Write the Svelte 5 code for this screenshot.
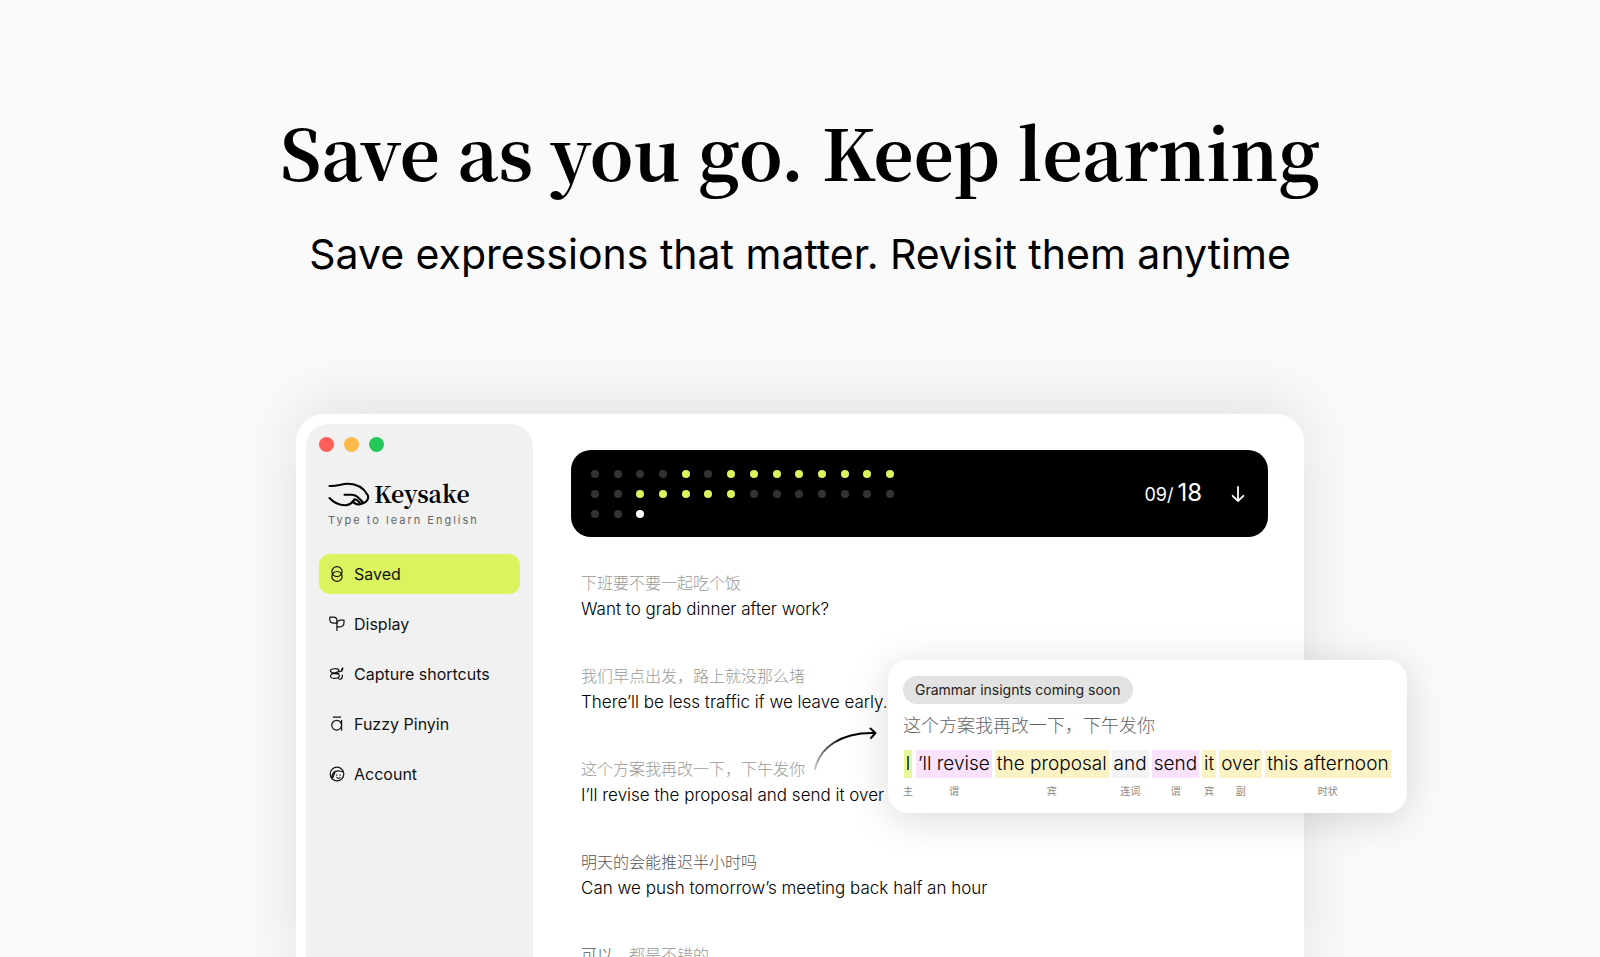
<script>
  const nav = [
    { id: 'saved', label: 'Saved', active: true },
    { id: 'display', label: 'Display' },
    { id: 'capture', label: 'Capture shortcuts' },
    { id: 'pinyin', label: 'Fuzzy Pinyin' },
    { id: 'account', label: 'Account' }
  ];

  // One character per day: o = idle, x = practised, w = today
  const days = 'ooooxoxxxxxxxx' + 'ooxxxxxooooooo' + 'oow';

  const phrases = [
    { zh: '下班要不要一起吃个饭', en: 'Want to grab dinner after work?' },
    { zh: '我们早点出发，路上就没那么堵', en: 'There’ll be less traffic if we leave early.' },
    { zh: '这个方案我再改一下，下午发你', en: 'I’ll revise the proposal and send it over this afternoon' },
    { zhStrong: '明天的会能推迟半小时吗', zh: '', en: 'Can we push tomorrow’s meeting back half an hour' },
    { zhStrong: '可以，', zh: '都是不错的' }
  ];

  const tokens = [
    { text: 'I', role: '主', tone: 'lime' },
    { text: '’ll revise', role: '谓', tone: 'pink' },
    { text: 'the proposal', role: '宾', tone: 'yellow' },
    { text: 'and', role: '连词', tone: 'grey' },
    { text: 'send', role: '谓', tone: 'pink' },
    { text: 'it', role: '宾', tone: 'yellow' },
    { text: 'over', role: '副', tone: 'yellow' },
    { text: 'this afternoon', role: '时状', tone: 'yellow' }
  ];
</script>

<main class="page">
  <header class="hero">
    <h1>Save as you go. Keep learning</h1>
    <p>Save expressions that matter. Revisit them anytime</p>
  </header>

  <div class="window">
    <aside class="sidebar">
      <div class="lights"><i class="red"></i><i class="amber"></i><i class="green"></i></div>

      <div class="brand">
        <div class="brand-row">
          <svg width="42" height="26" viewBox="0 0 42 26" fill="none" stroke="#000" stroke-width="2.1" stroke-linecap="round" stroke-linejoin="round" aria-hidden="true">
            <path d="M1.5 5C9 5.6 13 2.8 20 2.8C29 2.8 36 7.6 39.6 14C41.4 17.8 38.4 21.4 35 22.2C32.2 24 28.6 23.6 27 22.4L24.4 20.6" />
            <path d="M1.5 17C6 22 11 24.2 17 24.2C21.4 24.2 24 22.6 26.4 18.6" />
            <path d="M16.5 13.8H23C27.4 13.8 29.6 15.6 31.4 17.8C33 19.2 34.4 20.4 35 22.2" />
            <path d="M26.4 18.6C28.4 18 30 19.4 32.4 22.8" />
          </svg>
          <strong>Keysake</strong>
        </div>
        <small>Type to learn English</small>
      </div>

      <nav>
        {#each nav as item (item.id)}
          <a href="#{item.id}" class:active={item.active}>
            <svg width="16" height="16" viewBox="0 0 16 16" fill="none" stroke="#111" stroke-width="1.2" stroke-linecap="round" stroke-linejoin="round" aria-hidden="true">
              {#if item.id === 'saved'}
                <ellipse cx="8" cy="5.6" rx="5.1" ry="4.9" />
                <ellipse cx="8" cy="10.4" rx="5.1" ry="4.9" />
              {:else if item.id === 'display'}
                <path d="M.8 1.2H4.6C6.8 1.2 7.9 2.8 7.9 4.6V7.2H4.8C2.2 7.2 .8 5.8 .8 3.6Z" />
                <path d="M15 4.2V6.600C15 9.4 13.4 10.8 10.8 10.8H7.9V8.2C7.9 5.6 9.6 4.2 12 4.2ZM7.9 7.2V14.4" />
              {:else if item.id === 'capture'}
                <path d="M9.8 7.2C7 7.8 1.6 7.4 1.4 4.8C1.4 2.4 9.6 1.8 9.8 4.4C9.8 6.6 4 6.8 2.2 8.6C.4 10.6 2 12.4 5 12.4C8.6 12.4 11 10.8 10.4 9.2C9.8 7.6 5.6 7.6 3 7.4" />
                <path d="M10 5.6C12.4 5.6 13.6 4.8 13.8 2.6M12.6 3.2L13.8 1.8M9.6 12.6C11.6 14.2 13.6 12.4 13.4 9.2" />
              {:else if item.id === 'pinyin'}
                <ellipse cx="7.6" cy="9.2" rx="4.9" ry="4.9" />
                <path d="M12.6 4.4V14.2M4.4 1.2H11.6" />
              {:else}
                <circle cx="8" cy="8" r="6.8" />
                <path d="M3 12.2C2.4 7.6 5.4 4.8 9.4 4.8C11.6 4.8 13.4 5.2 14.4 6.4M3.2 12.4C5.4 9.6 4.8 7.6 6.4 5.6" />
                <path d="M7.8 8.8V9.2M11.2 8.8V9.2M7.8 11.6C8.8 12.4 10.2 12.4 11.2 11.6" />
              {/if}
            </svg>
            <span>{item.label}</span>
          </a>
        {/each}
      </nav>
    </aside>

    <section class="content">
      <div class="streak">
        <div class="dots">
          {#each days as d}<i class={d}></i>{/each}
        </div>
        <div class="date"><span>09/</span><b>18</b></div>
        <button type="button" aria-label="Expand">
          <svg width="16" height="18" viewBox="0 0 16 18" fill="none" stroke="#fff" stroke-width="1.8" stroke-linecap="round" stroke-linejoin="round" aria-hidden="true">
            <path d="M8 2V16M2.6 10.8L8 16L13.4 10.8" />
          </svg>
        </button>
      </div>

      <ul class="phrases">
        {#each phrases as p}
          <li>
            <span class="zh" lang="zh">{#if p.zhStrong}<em>{p.zhStrong}</em>{/if}{p.zh}</span>
            {#if p.en}<span class="en">{p.en}</span>{/if}
          </li>
        {/each}
      </ul>
    </section>

    <svg class="arrow" width="66" height="48" viewBox="0 0 66 48" fill="none" stroke-width="2" stroke-linecap="round" stroke-linejoin="round" aria-hidden="true">
      <defs>
        <linearGradient id="fade" gradientUnits="userSpaceOnUse" x1="2" y1="44" x2="30" y2="12">
          <stop offset="0" stop-color="#000" stop-opacity=".2" />
          <stop offset="1" stop-color="#000" />
        </linearGradient>
      </defs>
      <path d="M2 43C7 22 27 6 62 7" stroke="url(#fade)" />
      <path d="M57.5 2.5L62.5 7L58 12" stroke="#000" />
    </svg>

    <article class="card">
      <span class="pill">Grammar insignts coming soon</span>
      <p class="source" lang="zh">这个方案我再改一下，下午发你</p>
      <div class="tokens">
        {#each tokens as t}
          <div class="token">
            <span class="word {t.tone}">{t.text}</span>
            <span class="role" lang="zh">{t.role}</span>
          </div>
        {/each}
      </div>
    </article>
  </div>
</main>

<style>
  :global(body) {
    margin: 0;
    background: #fafafa;
  }
  .page {
    box-sizing: border-box;
    height: 100vh;
    display: flex;
    flex-direction: column;
    overflow: hidden;
    color: #000;
    font-family: Inter, 'Noto Sans CJK SC', sans-serif;
  }
  .hero {
    flex: none;
    padding: 99px 0 134px;
    text-align: center;
  }
  h1 {
    margin: 0;
    font: 700 70px/104px 'Noto Serif CJK SC', 'Liberation Serif', serif;
  }
  .hero p {
    margin: 25px 0 0;
    font-size: 41px;
    line-height: 52px;
  }
  .window {
    position: relative;
    flex: 1;
    box-sizing: border-box;
    width: 63%;
    margin: 0 auto;
    padding: 10px 36px 0 10px;
    display: flex;
    gap: 38px;
    background: #fff;
    border-radius: 28px 28px 0 0;
    box-shadow: 0 -12px 64px rgba(0, 0, 0, 0.1);
  }
  .sidebar {
    flex: none;
    box-sizing: border-box;
    width: 227px;
    padding: 13px 13px 0;
    background: #f1f1f1;
    border-radius: 22px 22px 0 0;
  }
  .lights {
    display: flex;
    gap: 10px;
  }
  .lights i {
    width: 15px;
    height: 15px;
    border-radius: 50%;
  }
  .red { background: #ff5f5a; }
  .amber { background: #fdba4b; }
  .green { background: #22c858; }
  .brand {
    padding: 26px 9px 24px;
  }
  .brand-row {
    display: flex;
    align-items: center;
    gap: 4px;
    height: 32px;
  }
  .brand strong {
    font: 700 23px/32px 'Noto Serif CJK SC', 'Liberation Serif', serif;
  }
  .brand small {
    display: block;
    font-size: 11px;
    line-height: 20px;
    letter-spacing: 2px;
    color: #666;
    white-space: nowrap;
  }
  nav {
    display: flex;
    flex-direction: column;
    gap: 10px;
  }
  nav a {
    display: flex;
    align-items: center;
    gap: 9px;
    height: 40px;
    padding: 0 10px;
    border-radius: 11px;
    color: #111;
    font-size: 16px;
    text-decoration: none;
  }
  nav a.active {
    background: #dcf360;
  }
  .content {
    flex: 1;
    min-width: 0;
    padding-top: 26px;
  }
  .streak {
    display: flex;
    align-items: center;
    box-sizing: border-box;
    height: 87px;
    padding: 0 22px 0 20px;
    background: #000;
    border-radius: 20px;
    color: #fff;
  }
  .dots {
    display: grid;
    grid-template-columns: repeat(14, 8px);
    justify-content: space-between;
    gap: 12px 0;
    width: 303px;
    margin-right: auto;
  }
  .dots i {
    height: 8px;
    border-radius: 50%;
    background: #333;
  }
  .dots .x { background: #dcf360; }
  .dots .w { background: #fff; }
  .date {
    display: flex;
    align-items: baseline;
    gap: 4px;
    line-height: 32px;
  }
  .date span { font-size: 18px; }
  .date b {
    font-size: 24px;
    font-weight: 400;
  }
  button {
    display: flex;
    margin-left: 28px;
    padding: 0;
    border: 0;
    background: none;
  }
  .phrases {
    display: grid;
    gap: 39px;
    margin: 0;
    padding: 32px 10px 0;
    list-style: none;
  }
  .phrases li {
    display: flex;
    flex-direction: column;
    height: 54px;
    white-space: nowrap;
  }
  .zh {
    font: 300 16px/27px 'Noto Sans CJK SC', sans-serif;
    color: #999;
  }
  .zh em {
    font-style: normal;
    color: #555;
  }
  .en {
    font-size: 17px;
    font-weight: 300;
    line-height: 27px;
  }
  .arrow {
    position: absolute;
    left: 517px;
    top: 312px;
  }
  .card {
    position: absolute;
    left: 592px;
    top: 246px;
    box-sizing: border-box;
    padding: 16px 16px 14px 15px;
    background: #fff;
    border-radius: 20px;
    box-shadow: 0 6px 40px rgba(0, 0, 0, 0.15);
  }
  .pill {
    display: inline-block;
    padding: 0 12px;
    border-radius: 14px;
    background: #e2e2e2;
    color: #222;
    font-size: 14px;
    line-height: 28px;
  }
  .source {
    margin: 5px 0 11px;
    font: 300 18px/30px 'Noto Sans CJK SC', sans-serif;
    color: #666;
  }
  .tokens {
    display: flex;
    gap: 3px;
  }
  .token {
    display: flex;
    flex-direction: column;
    align-items: center;
    gap: 5px;
  }
  .word {
    padding: 0 2px;
    font-size: 19px;
    font-weight: 300;
    line-height: 28px;
    white-space: nowrap;
  }
  .lime { background: #e5f79b; }
  .pink { background: #fae2fd; }
  .yellow { background: #fbf3c4; }
  .grey { background: #f3f3f3; }
  .role {
    font: 400 10px/16px 'Noto Sans CJK SC', sans-serif;
    color: #888;
  }
</style>
